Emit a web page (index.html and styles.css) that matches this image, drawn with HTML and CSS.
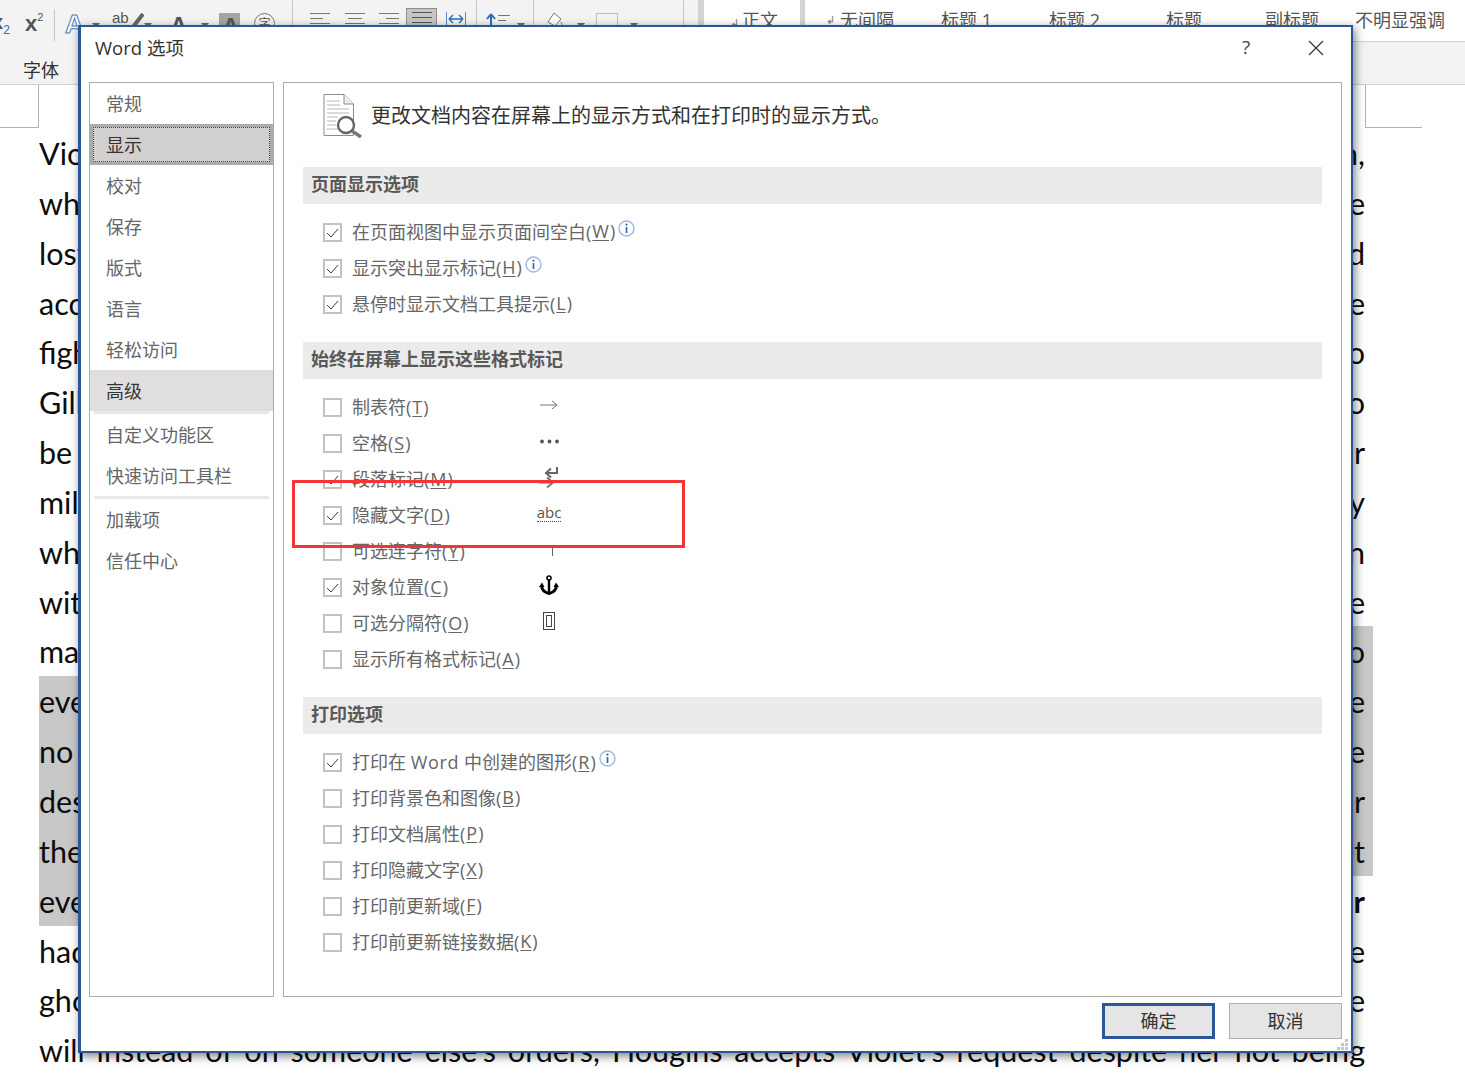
FILE: index.html
```html
<!DOCTYPE html>
<html lang="zh-CN">
<head>
<meta charset="utf-8">
<title>Word 选项</title>
<link rel="stylesheet" href="styles.css">
</head>
<body>
<svg class="defs" width="0" height="0" aria-hidden="true">
  <defs>
    <symbol id="chk" viewBox="0 0 15 15"><path d="M2 8 L6 12 L13 4" fill="none" stroke="#3c3c3c" stroke-width="1"/></symbol>
    <symbol id="drop" viewBox="0 0 8 5"><path d="M0 0H8L4 5Z" fill="#666"/></symbol>
    <symbol id="info" viewBox="0 0 17 17"><circle cx="8.5" cy="8.5" r="7.5" fill="#fff" stroke="#9db8de" stroke-width="1.4"/><path d="M8.5 7V13" stroke="#2b6cb8" stroke-width="1.7"/><circle cx="8.5" cy="4.7" r="1.1" fill="#2b6cb8"/></symbol>
  </defs>
</svg>

<header class="ribbon">
  <div class="tools">
    <span class="t-sub">x<sub>2</sub></span>
    <span class="t-sup">x<sup>2</sup></span>
    <span class="rsep short"></span>
    <span class="t-effect">A</span>
    <svg class="drop" width="8" height="5"><use href="#drop"/></svg>
    <span class="t-ab">ab<svg width="20" height="24" viewBox="0 0 20 24"><path d="M2 24 L19 2" stroke="#666" stroke-width="4"/></svg></span>
    <svg class="drop" width="8" height="5"><use href="#drop"/></svg>
    <span class="t-a">A</span>
    <svg class="drop" width="8" height="5"><use href="#drop"/></svg>
    <span class="t-shade">A</span>
    <span class="t-circle">字</span>
    <span class="rsep"></span>
    <svg width="20" height="24" viewBox="0 0 20 24"><path d="M0 13.5H20M0 18.5H13M0 23.5H20" stroke="#777"/></svg>
    <svg width="20" height="24" viewBox="0 0 20 24"><path d="M0 13.5H20M3 18.5H17M0 23.5H20" stroke="#777"/></svg>
    <svg width="20" height="24" viewBox="0 0 20 24"><path d="M0 13.5H20M7 18.5H20M0 23.5H20" stroke="#777"/></svg>
    <span class="t-on"><svg width="20" height="24" viewBox="0 0 20 24"><path d="M0 13.5H20M0 18.5H20M0 23.5H20" stroke="#555"/></svg></span>
    <svg width="20" height="26" viewBox="0 0 20 26"><path d="M.5 12V26M19.5 12V26" stroke="#5b87c4"/><path d="M3 19H17M3 19l4-4M3 19l4 4M17 19l-4-4M17 19l-4 4" fill="none" stroke="#2b6cb8" stroke-width="1.4"/></svg>
    <span class="rsep"></span>
    <svg width="24" height="26" viewBox="0 0 24 26"><path d="M5 26V15M5 14l-4 5M5 14l4 5" fill="none" stroke="#2b6cb8" stroke-width="2"/><path d="M12 15.5H24M12 20.5H20" stroke="#777"/></svg>
    <svg class="drop" width="8" height="5"><use href="#drop"/></svg>
    <span class="rsep"></span>
    <svg width="17" height="26" viewBox="0 0 17 26"><path d="M7 13 L1 22 L8 26 L14 19 Z" fill="#fff" stroke="#777"/><path d="M13 21 Q17 24 15 26" fill="#6d97cf"/></svg>
    <svg class="drop" width="8" height="5"><use href="#drop"/></svg>
    <svg width="22" height="26" viewBox="0 0 22 26"><rect x=".5" y="13.5" width="21" height="12" fill="none" stroke="#888" stroke-dasharray="1 1"/></svg>
    <svg class="drop" width="8" height="5"><use href="#drop"/></svg>
    <span class="rsep"></span>
    <div class="gallery">
      <div class="style-cur"><span class="style-mark">↲</span>正文</div>
      <div class="style-list">
        <span class="style-mark">↲</span>
        <span class="st st1">无间隔</span>
        <span class="st st2">标题 1</span>
        <span class="st st3">标题 2</span>
        <span class="st st4">标题</span>
        <span class="st st5">副标题</span>
        <span class="st">不明显强调</span>
      </div>
    </div>
  </div>
  <div class="group-labels"><span>字体</span></div>
</header>

<main class="doc">
  <div class="crop crop-l"></div>
  <div class="crop crop-r"></div>
  <p class="line">Violet Evergarden is a young girl who was raised as a weapon during the war, and then,</p>
  <p class="line">who served under Major Gilbert, wakes in a hospital with no memory of the time</p>
  <p class="line">lost in the final battle of the war and wears the metal arms that she had</p>
  <p class="line">accepted without complaint, as her only purpose is to follow orders once more</p>
  <p class="line">fighting for the Major, and she asks everyone she meets where he is and when to go</p>
  <p class="line">Gilbert's old friend tells her that the Major has gone away and that she has to</p>
  <p class="line">be looked after by his relatives, but Violet is unsure what to do as a civilian, or</p>
  <p class="line">military tool, so she joins the postal company he founded in the port city quickly</p>
  <p class="line">while there she sees a Doll writing a letter for a client and wants to learn, then</p>
  <p class="line">with the hope that she may one day come to understand what his words could be</p>
  <p class="line split"><span>many letters later she</span><span class="hl hl-r">begins to learn of love, and she goes on to</span></p>
  <p class="line sel">everything she has done in the war starts to weigh on her, and she feels a deep shame</p>
  <p class="line sel">no amount of letters can make up for it, and each client reminds her of all she gave</p>
  <p class="line sel">despite this, she continues her work and the people around her help her be a writer</p>
  <p class="line sel">the years pass and one day a letter arrives saying the Major may be alive in secret</p>
  <p class="line split"><span class="hl">eventually she travels to the island</span><span>and finds the man she has searched for, her <b>Major</b></span></p>
  <p class="line">had he lived, he would have returned, but he says he is a ghost of the man she knew once</p>
  <p class="line">ghosts of the past can be laid to rest, and Violet writes a final letter for someone</p>
  <p class="line">will instead of on someone else's orders, Hougins accepts Violet's request despite her not being</p>
</main>

<section class="dialog">
  <div class="titlebar">
    <h1 class="title">Word 选项</h1>
    <span class="help">?</span>
    <svg class="close" width="16" height="16" viewBox="0 0 16 16"><path d="M1 1L15 15M15 1L1 15" stroke="#333" stroke-width="1.2"/></svg>
  </div>
  <div class="body">
    <nav class="nav">
      <a class="nav-item">常规</a>
      <a class="nav-item focus"><span>显示</span></a>
      <a class="nav-item">校对</a>
      <a class="nav-item">保存</a>
      <a class="nav-item">版式</a>
      <a class="nav-item">语言</a>
      <a class="nav-item">轻松访问</a>
      <a class="nav-item hover">高级</a>
      <div class="nav-sep"></div>
      <a class="nav-item">自定义功能区</a>
      <a class="nav-item">快速访问工具栏</a>
      <div class="nav-sep"></div>
      <a class="nav-item">加载项</a>
      <a class="nav-item">信任中心</a>
    </nav>
    <div class="panel">
      <div class="intro">
        <svg width="41" height="45" viewBox="0 0 41 45">
          <path d="M2 1.5H22L31.5 11V42.5H2Z" fill="#fff" stroke="#8c8c8c"/>
          <path d="M22 1.5V11H31.5" fill="#eee" stroke="#8c8c8c"/>
          <path d="M5 8H18M5 12H18M5 16H27M5 20H27M5 24H16M5 28H14M5 32H14M5 36H15" stroke="#b8b8b8"/>
          <circle cx="24" cy="32" r="8" fill="#fff" stroke="#666" stroke-width="2.4"/>
          <path d="M30 38L39 44" stroke="#777" stroke-width="3.4"/>
        </svg>
        <p>更改文档内容在屏幕上的显示方式和在打印时的显示方式。</p>
      </div>

      <h2 class="sec">页面显示选项</h2>
      <ul class="opts">
        <li><span class="cb"><svg width="15" height="15"><use href="#chk"/></svg></span>在页面视图中显示页面间空白(<u>W</u>)<svg class="info" width="17" height="17"><use href="#info"/></svg></li>
        <li><span class="cb"><svg width="15" height="15"><use href="#chk"/></svg></span>显示突出显示标记(<u>H</u>)<svg class="info" width="17" height="17"><use href="#info"/></svg></li>
        <li><span class="cb"><svg width="15" height="15"><use href="#chk"/></svg></span>悬停时显示文档工具提示(<u>L</u>)</li>
      </ul>

      <h2 class="sec">始终在屏幕上显示这些格式标记</h2>
      <ul class="opts">
        <li><span class="cb"></span><span class="lb">制表符(<u>T</u>)</span><span class="sym"><svg width="18" height="10" viewBox="0 0 18 10"><path d="M0 5H17M12 1L17 5L12 9" fill="none" stroke="#777"/></svg></span></li>
        <li><span class="cb"></span><span class="lb">空格(<u>S</u>)</span><span class="sym"><svg width="19" height="5" viewBox="0 0 19 5"><circle cx="2" cy="2.5" r="1.9" fill="#555"/><circle cx="9.5" cy="2.5" r="1.9" fill="#555"/><circle cx="17" cy="2.5" r="1.9" fill="#555"/></svg></span></li>
        <li><span class="cb"><svg width="15" height="15"><use href="#chk"/></svg></span><span class="lb">段落标记(<u>M</u>)</span><span class="sym"><svg width="20" height="22" viewBox="0 0 20 22"><path d="M18 1V7H8M12 2.500L7 7L12 11.500" fill="none" stroke="#666" stroke-width="2"/><path d="M0 16.500H13M8 11.500L14 16.500L8 21.500" fill="none" stroke="#777" stroke-width="2"/></svg></span></li>
        <li><span class="cb"><svg width="15" height="15"><use href="#chk"/></svg></span><span class="lb">隐藏文字(<u>D</u>)</span><span class="sym"><span class="abc">abc</span></span></li>
        <li><span class="cb"></span><span class="lb">可选连字符(<u>Y</u>)</span><span class="sym"><svg class="hy" width="10" height="12" viewBox="0 0 10 12"><path d="M5.500 1V10" fill="none" stroke="#666"/></svg></span></li>
        <li><span class="cb"><svg width="15" height="15"><use href="#chk"/></svg></span><span class="lb">对象位置(<u>C</u>)</span><span class="sym"><svg width="20" height="20" viewBox="0 0 20 20"><circle cx="10" cy="3" r="2" fill="none" stroke="#000" stroke-width="1.600"/><path d="M10 5V18" stroke="#000" stroke-width="2.400"/><path d="M2.500 10.500Q3 17 10 18.500Q17 17 17.500 10.500" fill="none" stroke="#000" stroke-width="3"/><path d="M0 12L3 7.500L5.500 12ZM14.500 12L17 7.500L20 12Z" fill="#000"/></svg></span></li>
        <li><span class="cb"></span><span class="lb">可选分隔符(<u>O</u>)</span><span class="sym"><svg width="12" height="18" viewBox="0 0 12 18"><rect x=".5" y=".5" width="11" height="17" fill="#fff" stroke="#444"/><rect x="3.500" y="3.500" width="5" height="11" fill="none" stroke="#444"/></svg></span></li>
        <li><span class="cb"></span><span class="lb">显示所有格式标记(<u>A</u>)</span></li>
      </ul>

      <h2 class="sec">打印选项</h2>
      <ul class="opts">
        <li><span class="cb"><svg width="15" height="15"><use href="#chk"/></svg></span><span>打印在 <span class="wd">Word</span> 中创建的图形(<u>R</u>)</span><svg class="info" width="17" height="17"><use href="#info"/></svg></li>
        <li><span class="cb"></span>打印背景色和图像(<u>B</u>)</li>
        <li><span class="cb"></span>打印文档属性(<u>P</u>)</li>
        <li><span class="cb"></span>打印隐藏文字(<u>X</u>)</li>
        <li><span class="cb"></span>打印前更新域(<u>F</u>)</li>
        <li><span class="cb"></span>打印前更新链接数据(<u>K</u>)</li>
      </ul>
    </div>
  </div>
  <div class="footer">
    <button class="btn primary">确定</button>
    <button class="btn">取消</button>
    <svg class="grip" width="11" height="11" viewBox="0 0 11 11"><path d="M8 0h3v3H8zM4 4h3v3H4zM8 4h3v3H8zM0 8h3v3H0zM4 8h3v3H4zM8 8h3v3H8z" fill="#c4c4c4"/></svg>
  </div>
</section>

<div class="annotation"></div>
</body>
</html>
```
FILE: styles.css
```css
* { box-sizing: border-box; }
html, body { margin: 0; padding: 0; }
body {
  position: relative;
  width: 1465px;
  height: 1080px;
  overflow: hidden;
  background: #fff;
  font-family: "Open Sans", "Noto Sans CJK SC", sans-serif;
  color: #333;
}
.defs { position: absolute; }

/* ribbon */
.ribbon {
  height: 85px;
  background: #f3f3f3;
  border-bottom: 1px solid #d2d0ce;
  overflow: hidden;
}
.tools {
  display: grid;
  height: 42px;
  grid-template-columns: 25px 29px 11px 27px 20px 32px 26px 31px 18px 35px 38px 18px 35px 34px 27px 40px 30px 10px 31px 16px 14px 30px 19px 34px 53px 15px 1fr;
  align-items: start;
}
.tools > .drop { margin-top: 23px; }
.rsep { width: 1px; height: 42px; background: #c8c6c4; }
.rsep.short { margin-top: 9px; height: 32px; }
.t-sub, .t-sup, .t-effect, .t-a, .t-shade, .t-ab, .t-circle {
  font-family: "Liberation Sans", sans-serif;
  color: #555;
  line-height: 1;
}
.t-sub { font-size: 20px; margin: 12px 0 0 -8px; font-weight: 700; }
.t-sub sub { font-size: 12px; color: #2b6cb8; font-weight: 400; }
.t-sup { font-size: 22px; margin-top: 12px; font-weight: 700; }
.t-sup sup { font-size: 11px; font-weight: 400; vertical-align: 10px; }
.t-effect { font-size: 26px; margin-top: 11px; font-weight: 700; color: #fff; -webkit-text-stroke: 1px #4a7ebb; }
.t-ab { font-size: 15px; margin-top: 10px; }
.t-ab svg { vertical-align: top; margin-left: -5px; margin-top: 2px; }
.t-a { font-size: 24px; margin-top: 14px; font-weight: 700; }
.t-shade { font-size: 24px; padding: 2px 3px; margin-top: 13px; width: 21px; height: 26px; background: #a6a6a6; font-weight: 700; }
.t-circle { font-family: "Noto Sans CJK SC", sans-serif; font-size: 12px; width: 21px; height: 21px; margin-top: 13px; border: 1.5px solid #777; border-radius: 50%; text-align: center; line-height: 18px; }
.t-on { width: 31px; height: 27px; margin-top: 8px; padding: 0 5px; background: #c6c6c6; border: 1px solid #8e8e8e; }
.t-on svg { margin-top: -10px; display: block; }

.gallery { display: flex; height: 42px; background: #fff; border-bottom: 1px solid #d2d0ce; }
.style-cur {
  width: 107px;
  flex: none;
  background: #fff;
  border-left: 6px solid #d4d4d4;
  border-right: 5px solid #d4d4d4;
  padding: 7px 0 0 26px;
  font-size: 18px;
  line-height: 26px;
  color: #555;
}
.style-mark { font-size: 11px; color: #777; margin-right: 3px; }
.style-list { display: flex; flex: 1; padding: 7px 0 0 21px; font-size: 18px; line-height: 26px; color: #555; }
.style-list .style-mark { width: 14px; flex: none; margin: 0; }
.st { flex: none; white-space: nowrap; }
.st1 { width: 101px; }
.st2 { width: 108px; }
.st3 { width: 117px; }
.st4 { width: 99px; }
.st5 { width: 90px; }

.group-labels { padding: 15px 0 0 23px; font-size: 18px; line-height: 26px; color: #333; }

/* document */
.doc {
  position: relative;
  padding: 43px 0 0 39px;
  font-family: Lato, sans-serif;
  font-size: 30.5px;
  color: #0c0c0c;
}
.crop { position: absolute; top: 0; height: 43px; border-bottom: 1px solid #b3b3b3; }
.crop-l { left: 0; width: 39px; border-right: 1px solid #b3b3b3; }
.crop-r { left: 1365px; width: 57px; border-left: 1px solid #b3b3b3; }
.line {
  margin: 0;
  width: 1334px;
  height: 49.85px;
  line-height: 50.5px;
  padding-right: 8px;
  white-space: nowrap;
  text-align: justify;
  text-align-last: justify;
}
.line.split { display: flex; justify-content: space-between; padding-right: 0; text-align-last: auto; }
.line.split > span:last-child:not(.hl) { padding-right: 8px; }
.hl { background: #c8c8c8; height: 49.85px; }
.hl-r { padding-right: 8px; }
.sel { background: #c8c8c8; }

/* dialog */
.dialog {
  position: absolute;
  left: 78px;
  top: 25px;
  width: 1275px;
  height: 1028px;
  display: flex;
  flex-direction: column;
  background: #fff;
  border: 2px solid #2b579a;
  border-left-width: 3px;
  box-shadow: 2px 3px 9px rgba(0,0,0,.5);
  padding: 0 9px 0 8px;
}
.titlebar { display: flex; align-items: center; height: 55px; padding: 0 0 14px 6px; flex: none; }
.title { flex: 1; margin: 0 0 2px; font-size: 18.5px; font-weight: 400; color: #333; }
.help { width: 20px; font-size: 19px; color: #444; margin-right: 52px; text-align: center; line-height: 1; }
.close { margin-right: 18px; }
.body { display: flex; gap: 9px; flex: none; height: 915px; }
.nav { flex: none; width: 185px; border: 1px solid #ababab; }
.nav-item {
  display: block;
  height: 41px;
  line-height: 43px;
  padding-left: 16px;
  font-size: 18px;
  color: #666;
}
.nav-item.focus { background: #ababab; padding: 3px; color: #333; line-height: 35px; }
.nav-item.focus span { display: block; height: 35px; padding-left: 12px; background: #d2d0ce; border: 1px dotted #444; }
.nav-item.hover { background: #e1dfdd; color: #333; }
.nav-sep { height: 3px; margin: 0 4px; background: #e8e8e8; }

.panel { flex: 1; border: 1px solid #ababab; padding: 0 19px; min-width: 0; }
.intro { display: flex; align-items: center; gap: 8px; height: 64px; margin-bottom: 20px; padding-left: 19px; }
.intro p { margin: 0 0 2px; font-size: 20px; color: #333; white-space: nowrap; }
.sec {
  margin: 0;
  height: 37px;
  line-height: 35px;
  padding-left: 8px;
  background: #ebebeb;
  font-size: 18px;
  font-weight: 700;
  color: #595959;
}
.opts { list-style: none; margin: 0 0 20px; padding: 10px 0 0 20px; }
.opts:last-child { margin-bottom: 0; }
.opts li { display: flex; align-items: center; height: 36px; padding-bottom: 2px; font-size: 18px; color: #666; white-space: nowrap; }
.opts u { margin: 0 1px; text-underline-offset: 2px; }
.wd { letter-spacing: .7px; }
.cb {
  flex: none;
  width: 19px;
  height: 19px;
  margin: 2px 10px 0 0;
  border: 2px solid #c2c2c2;
  background: #fff;
  display: flex;
  align-items: center;
  justify-content: center;
}
.lb { flex: none; width: 176px; }
.sym { flex: none; width: 42px; height: 28px; display: flex; align-items: center; justify-content: center; margin-bottom: 2px; }
.sym .hy { margin: 6px 0 0 6px; }
.abc {
  font-size: 15px;
  line-height: 17px;
  color: #555;
  border-bottom: 1px dotted #444;
}
.info { flex: none; margin: 0 0 5px 3px; }

.footer { position: relative; display: flex; justify-content: flex-end; gap: 14px; padding-top: 6px; flex: 1; }
.btn {
  width: 113px;
  height: 36px;
  padding: 0 0 2px;
  background: #e5e5e5;
  border: 1px solid #adadad;
  border-radius: 0;
  font-family: inherit;
  font-size: 18px;
  color: #333;
}
.btn.primary { border: 3px solid #2b579a; }
.grip { position: absolute; right: -6px; bottom: 1px; }

.annotation {
  position: absolute;
  left: 292px;
  top: 480px;
  width: 393px;
  height: 68px;
  border: 3px solid #f53535;
  pointer-events: none;
}
```
